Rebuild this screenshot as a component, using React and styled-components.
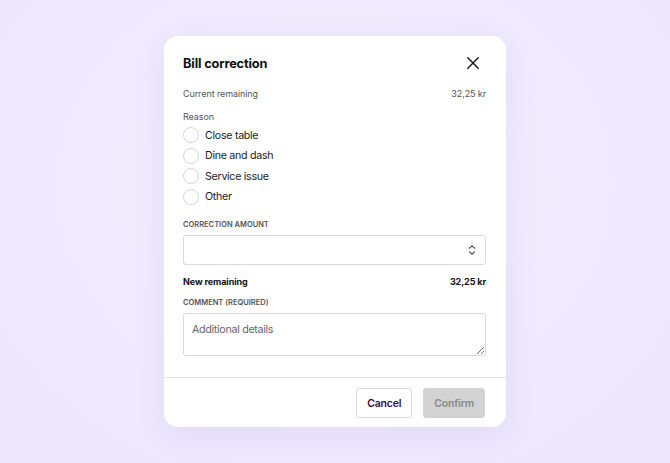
import styled, { createGlobalStyle } from "styled-components"

const Global = createGlobalStyle`
  * { box-sizing: border-box; }
  body {
    margin: 0;
    font-family: Inter, "Liberation Sans", sans-serif;
    background: #f0ecfd;
  }
`

const Page = styled.div`
  min-height: 100vh;
  display: flex;
  align-items: center;
  justify-content: center;
  background: radial-gradient(ellipse at 50% 40%, #f1eefb 0%, #eee9fd 60%, #ece6fd 100%);
`

const Card = styled.div`
  width: 342px;
  height: 391px;
  background: #fff;
  border-radius: 14px;
  box-shadow: 0 8px 30px rgba(90, 60, 170, 0.08);
  display: flex;
  flex-direction: column;
  overflow: hidden;
`

const Body = styled.div`
  padding: 17px 20px 21px 19px;
  display: flex;
  flex-direction: column;
  border-bottom: 1px solid #e4e4e4;
`

const Header = styled.div`
  height: 20px;
  display: flex;
  align-items: center;
  justify-content: space-between;
`

const Title = styled.h2`
  margin: 0;
  font-size: 12.8px;
  font-weight: 700;
  color: #111;
  letter-spacing: -0.15px;
`

const Close = styled.button`
  border: 0;
  background: none;
  padding: 0;
  margin-right: 6px;
  display: flex;
  cursor: pointer;
`

const Row = styled.div`
  display: flex;
  justify-content: space-between;
  align-items: center;
  height: ${p => p.h || 16}px;
  margin-top: ${p => p.mt || 0}px;
  font-size: 9px;
  letter-spacing: -0.1px;
  font-weight: ${p => (p.bold ? 700 : 400)};
  color: ${p => (p.bold ? "#111" : "#555")};
`

const Label = styled.div`
  height: 16px;
  margin-top: ${p => p.mt || 0}px;
  display: flex;
  align-items: center;
  font-size: 9px;
  letter-spacing: -0.1px;
  color: #555;
`

const Options = styled.div`
  margin-top: 1px;
  display: flex;
  flex-direction: column;
`

const Option = styled.label`
  height: 20.5px;
  display: flex;
  align-items: center;
  gap: 6px;
  font-size: 10.7px;
  letter-spacing: -0.3px;
  color: #1d1d1d;
  cursor: pointer;
`

const Radio = styled.span`
  width: 16px;
  height: 16px;
  border-radius: 50%;
  border: 1px solid #d6d6d6;
  background: #fff;
`

const Caps = styled.div`
  height: 12px;
  margin-top: ${p => p.mt || 0}px;
  display: flex;
  align-items: center;
  font-size: 7.5px;
  font-weight: 600;
  color: #555;
`

const InputBox = styled.div`
  margin-top: 5px;
  height: 30px;
  border: 1px solid #d9d9d9;
  border-radius: 3px;
  display: flex;
  align-items: center;
  justify-content: flex-end;
  padding-right: 9px;
`

const TextArea = styled.textarea`
  margin-top: 5px;
  height: 43px;
  width: 100%;
  border: 1px solid #d9d9d9;
  border-radius: 3px;
  padding: 9px 8px;
  font-family: inherit;
  font-size: 10.7px;
  letter-spacing: -0.3px;
  color: #222;
  outline: none;
  &::placeholder { color: #666; }
`

const Footer = styled.div`
  flex: 1;
  display: flex;
  justify-content: flex-end;
  align-items: flex-start;
  gap: 11px;
  padding: 10px 21px 0 0;
`

const Button = styled.button`
  height: 30px;
  padding: 0 10px;
  border-radius: 3px;
  font-family: inherit;
  font-size: 10.5px;
  letter-spacing: -0.2px;
  font-weight: 600;
  border: 1px solid ${p => (p.primary ? "#d3d3d3" : "#d9d9d9")};
  background: ${p => (p.primary ? "#d3d3d3" : "#fff")};
  color: ${p => (p.primary ? "#888" : "#3a0c3f")};
`

const reasons = ["Close table", "Dine and dash", "Service issue", "Other"]

const App = () => {
  return (
    <Page>
      <Global />
      <Card>
        <Body>
          <Header>
            <Title>Bill correction</Title>
            <Close>
              <svg width="14" height="14" viewBox="0 0 14 14">
                <path d="M1.8 1.8 L12.2 12.2 M12.2 1.8 L1.8 12.2" stroke="#111" strokeWidth="1.4" strokeLinecap="round" />
              </svg>
            </Close>
          </Header>
          <Row mt={12}>
            <span>Current remaining</span>
            <span>32,25 kr</span>
          </Row>
          <Label mt={7}>Reason</Label>
          <Options>
            {reasons.map(r => (
              <Option key={r}>
                <Radio />
                {r}
              </Option>
            ))}
          </Options>
          <Caps mt={11}>CORRECTION AMOUNT</Caps>
          <InputBox>
            <svg width="8" height="12" viewBox="0 0 8 12">
              <path d="M1.5 4.2 L4 1.8 L6.5 4.2 M1.5 7.8 L4 10.2 L6.5 7.8" stroke="#444" strokeWidth="1.1" fill="none" strokeLinecap="round" strokeLinejoin="round" />
            </svg>
          </InputBox>
          <Row mt={9} h={14} bold>
            <span>New remaining</span>
            <span>32,25 kr</span>
          </Row>
          <Caps mt={8}>COMMENT (REQUIRED)</Caps>
          <TextArea placeholder="Additional details" />
        </Body>
        <Footer>
          <Button>Cancel</Button>
          <Button primary>Confirm</Button>
        </Footer>
      </Card>
    </Page>
  )
}

export default App
